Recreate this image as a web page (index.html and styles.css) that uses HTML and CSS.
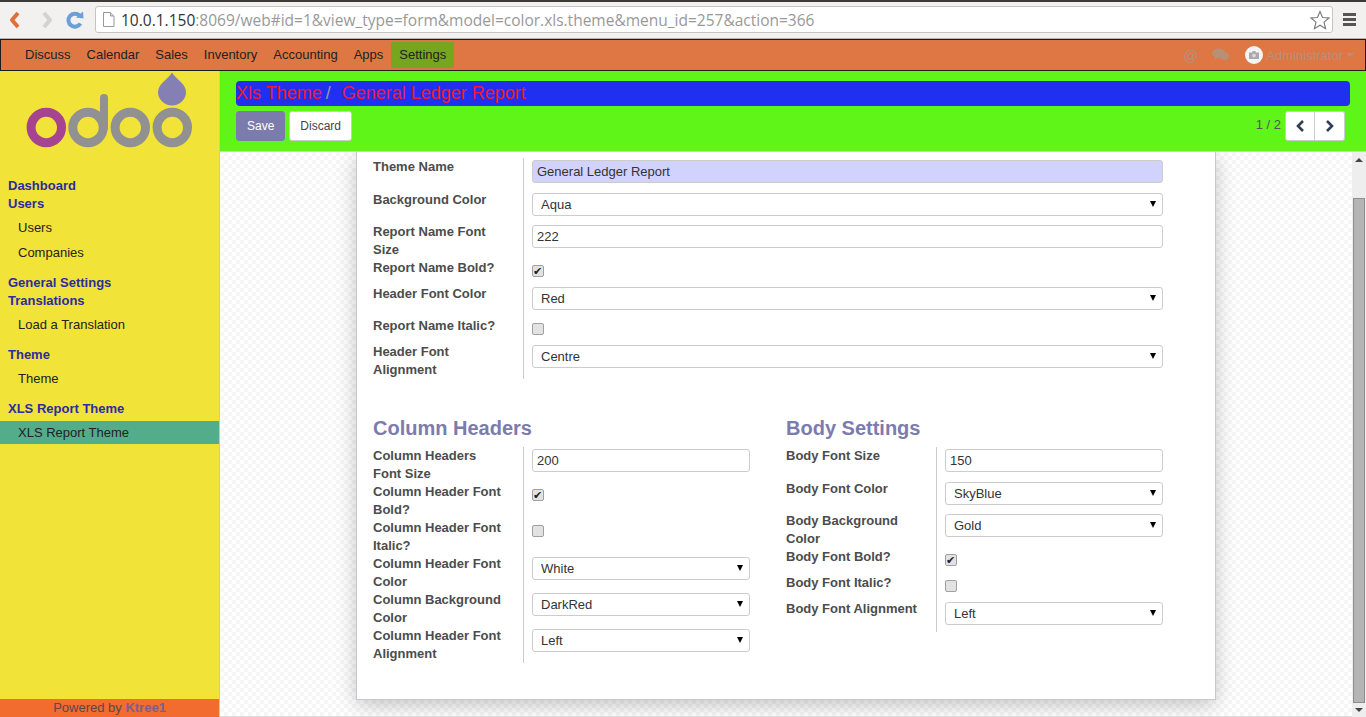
FILE: index.html
```html
<!doctype html>
<html>
<head>
<meta http-equiv="Content-Type" content="text/html; charset=utf-8">
<title>General Ledger Report - Odoo</title>
<link rel="stylesheet" href="styles.css">
</head>
<body>
<div class="chrome">
	<svg class="chrome-btn" width="20" height="24" viewBox="0 0 20 24"><path d="M13 5 L7 12 L13 19" fill="none" stroke="#e0703a" stroke-width="4" stroke-linejoin="round"/></svg>
	<svg class="chrome-btn fwd" width="20" height="24" viewBox="0 0 20 24"><path d="M7 5 L13 12 L7 19" fill="none" stroke="#d2d2d0" stroke-width="4" stroke-linejoin="round"/></svg>
	<svg class="chrome-btn" width="20" height="24" viewBox="0 0 20 24"><path d="M15.5 15.5 A6.5 6.5 0 1 1 14.5 7.5" fill="none" stroke="#6a9fd8" stroke-width="4"/><path d="M11 9.5 L18.5 10.5 L18 3.5 Z" fill="#6a9fd8"/></svg>
	<div class="urlbar">
		<svg width="13" height="15" viewBox="0 0 13 15"><path d="M1.5 .5 H8.5 L12 4 V14.5 H1.5 Z" fill="#fff" stroke="#999"/><path d="M8.5 .5 V4 H12" fill="#ddd" stroke="#999"/></svg>
		<span class="url"><b>10.0.1.150</b>:8069/web#id=1&amp;view_type=form&amp;model=color.xls.theme&amp;menu_id=257&amp;action=366</span>
		<svg class="star" width="20" height="20" viewBox="0 0 20 20"><path d="M10 1.5 L12.5 7.5 L19 8 L14 12.2 L15.6 18.6 L10 15.2 L4.4 18.6 L6 12.2 L1 8 L7.5 7.5 Z" fill="#fff" stroke="#777" stroke-width="1.1"/></svg>
	</div>
	<div class="hamburger"><i></i><i></i><i></i></div>
</div>

<nav class="navbar">
	<div class="apps">
		<a href="#">Discuss</a>
		<a href="#">Calendar</a>
		<a href="#">Sales</a>
		<a href="#">Inventory</a>
		<a href="#">Accounting</a>
		<a href="#">Apps</a>
		<a href="#" class="on">Settings</a>
	</div>
	<div class="systray">
		<span class="at">@</span>
		<svg class="chat" width="17" height="14" viewBox="0 0 17 14"><ellipse cx="6.5" cy="5" rx="6.5" ry="4.6" fill="#b89078"/><path d="M3 8 L2 12 L7 9 Z" fill="#b89078"/><ellipse cx="12" cy="8" rx="5" ry="3.8" fill="#b89078"/><path d="M14 10 L15.5 13.5 L11 11 Z" fill="#b89078"/></svg>
		<span class="avatar"><svg width="10" height="8" viewBox="0 0 10 8"><path d="M0 1.5 H3 L3.8 0 H6.2 L7 1.5 H10 V8 H0 Z" fill="#aaa"/><circle cx="5" cy="4.6" r="1.8" fill="#ddd"/></svg></span>
		<span class="user">Administrator</span>
		<span class="caret"></span>
	</div>
</nav>

<div class="app">
	<aside class="sidebar">
		<div class="logo">
			<svg width="219" height="105" viewBox="0 0 219 105">
				<g fill="none" stroke-width="9">
					<circle cx="46.3" cy="56.5" r="15.2" stroke="#a6448f"/>
					<circle cx="88" cy="56.5" r="15.2" stroke="#919191"/>
					<path d="M104 56.5 V27" stroke="#919191" stroke-width="8" stroke-linecap="round"/>
					<circle cx="130.3" cy="56.5" r="15.2" stroke="#919191"/>
					<circle cx="172.3" cy="56.5" r="15.2" stroke="#919191"/>
				</g>
				<path d="M172 1.5 C176 8 186 13 186 21 A14 13.5 0 0 1 158 21 C158 13 168 8 172 1.5 Z" fill="#8580b4"/>
			</svg>
		</div>
		<div class="menu">
			<div class="menu-group">
				<a href="#" class="menu-head">Dashboard</a>
				<a href="#" class="menu-head">Users</a>
				<div class="menu-sub">
					<a href="#">Users</a>
					<a href="#">Companies</a>
				</div>
			</div>
			<div class="menu-group">
				<a href="#" class="menu-head">General Settings</a>
				<a href="#" class="menu-head">Translations</a>
				<div class="menu-sub">
					<a href="#">Load a Translation</a>
				</div>
			</div>
			<div class="menu-group">
				<a href="#" class="menu-head">Theme</a>
				<div class="menu-sub">
					<a href="#">Theme</a>
				</div>
			</div>
			<div class="menu-group">
				<a href="#" class="menu-head">XLS Report Theme</a>
				<div class="menu-sub">
					<a href="#" class="active">XLS Report Theme</a>
				</div>
			</div>
		</div>
		<div class="powered">Powered by <b>Ktree1</b></div>
	</aside>

	<div class="workspace">
		<div class="control-panel">
			<div class="breadcrumb"><a href="#">Xls Theme</a><span class="sep">/</span><span class="current">General Ledger Report</span></div>
			<div class="cp-row">
				<div class="cp-buttons">
					<button class="btn btn-primary">Save</button>
					<button class="btn">Discard</button>
				</div>
				<div class="pager">
					<span class="pager-value">1 / 2</span>
					<div class="pager-btns">
						<button class="btn pager-btn"><svg width="12" height="14" viewBox="0 0 12 14"><path d="M9 2 L4 7 L9 12" fill="none" stroke="#2f3f55" stroke-width="2.6"/></svg></button>
						<button class="btn pager-btn"><svg width="12" height="14" viewBox="0 0 12 14"><path d="M3 2 L8 7 L3 12" fill="none" stroke="#2f3f55" stroke-width="2.6"/></svg></button>
					</div>
				</div>
			</div>
		</div>

		<div class="content-wrap">
			<div class="content">
				<div class="sheet">
					<div class="group">
						<div class="row"><label>Theme Name</label><div class="val"><input class="required" value="General Ledger Report"></div></div>
						<div class="row"><label>Background Color</label><div class="val"><div class="sel"><select><option>Aqua</option></select></div></div></div>
						<div class="row"><label>Report Name Font Size</label><div class="val"><input value="222"></div></div>
						<div class="row"><label>Report Name Bold?</label><div class="val"><input type="checkbox" checked></div></div>
						<div class="row"><label>Header Font Color</label><div class="val"><div class="sel"><select><option>Red</option></select></div></div></div>
						<div class="row"><label>Report Name Italic?</label><div class="val"><input type="checkbox"></div></div>
						<div class="row"><label>Header Font Alignment</label><div class="val"><div class="sel"><select><option>Centre</option></select></div></div></div>
					</div>
					<div class="columns">
						<div class="group">
							<h2>Column Headers</h2>
							<div class="row"><label>Column Headers Font Size</label><div class="val"><input value="200"></div></div>
							<div class="row"><label>Column Header Font Bold?</label><div class="val"><input type="checkbox" checked></div></div>
							<div class="row"><label>Column Header Font Italic?</label><div class="val"><input type="checkbox"></div></div>
							<div class="row"><label>Column Header Font Color</label><div class="val"><div class="sel"><select><option>White</option></select></div></div></div>
							<div class="row"><label>Column Background Color</label><div class="val"><div class="sel"><select><option>DarkRed</option></select></div></div></div>
							<div class="row"><label>Column Header Font Alignment</label><div class="val"><div class="sel"><select><option>Left</option></select></div></div></div>
						</div>
						<div class="group">
							<h2>Body Settings</h2>
							<div class="row"><label>Body Font Size</label><div class="val"><input value="150"></div></div>
							<div class="row"><label>Body Font Color</label><div class="val"><div class="sel"><select><option>SkyBlue</option></select></div></div></div>
							<div class="row"><label>Body Background Color</label><div class="val"><div class="sel"><select><option>Gold</option></select></div></div></div>
							<div class="row"><label>Body Font Bold?</label><div class="val"><input type="checkbox" checked></div></div>
							<div class="row"><label>Body Font Italic?</label><div class="val"><input type="checkbox"></div></div>
							<div class="row"><label>Body Font Alignment</label><div class="val"><div class="sel"><select><option>Left</option></select></div></div></div>
						</div>
					</div>
				</div>
			</div>
			<div class="scrollbar">
				<span class="arrow-up"></span>
				<span class="thumb"></span>
				<span class="arrow-down"></span>
			</div>
		</div>
	</div>
</div>
</body>
</html>
```

FILE: styles.css
```css
*{
	box-sizing:border-box;
}
html,body{
	margin:0;
	height:717px;
	overflow:hidden;
}
body{
	display:flex;
	flex-direction:column;
	font-family:"Liberation Sans",Arial,sans-serif;
	font-size:13px;
	color:#333;
}
a{
	text-decoration:none;
	color:inherit;
}

/* browser bar */
.chrome{
	height:39px;
	flex:none;
	display:flex;
	align-items:center;
	padding:0 0 1px 5px;
	background:#f2f1f0;
	border-top:2px solid #3c3b37;
	border-bottom:1px solid #b5b5b3;
}
.chrome-btn{
	margin-right:12px;
}
.chrome-btn.fwd{
	margin-right:8px;
}
.urlbar{
	width:1238px;
	height:27px;
	margin-left:-2px;
	display:flex;
	align-items:center;
	padding:0 2px 0 6px;
	background:#fff;
	border:1px solid #c4c4c4;
	border-radius:3px;
}
.url{
	margin-left:6px;
	font-family:"Open Sans","Noto Sans",sans-serif;
	font-size:15.5px;
	color:#999;
	white-space:nowrap;
	flex:1;
}
.url b{
	font-weight:normal;
	color:#333;
}
.hamburger{
	margin-left:10px;
	width:13px;
	display:flex;
	flex-direction:column;
	gap:2px;
}
.hamburger i{
	display:block;
	height:3px;
	background:#555;
}

/* top menu */
.navbar{
	height:32px;
	flex:none;
	display:flex;
	justify-content:space-between;
	background:#de7744;
	border:1px solid #1d1d1d;
	padding-left:16px;
}
.apps{
	display:flex;
	align-items:center;
}
.apps a{
	height:26px;
	line-height:26px;
	padding:0 8px;
	color:#222;
}
.apps a.on{
	background:#75a61e;
}
.systray{
	display:flex;
	align-items:center;
	color:#b89078;
	padding-right:11px;
}
.at{
	font-size:15px;
	margin-right:14px;
}
.chat{
	margin-right:16px;
}
.avatar{
	width:18px;
	height:18px;
	border-radius:50%;
	background:#f4f4f4;
	display:flex;
	align-items:center;
	justify-content:center;
	margin-right:3px;
}
.caret{
	margin-left:3px;
	border:4px solid transparent;
	border-top-color:#b89078;
	border-bottom:0;
	width:0;
	height:0;
}

.app{
	flex:1;
	min-height:0;
	display:flex;
}

/* sidebar */
.sidebar{
	width:220px;
	flex:none;
	display:flex;
	flex-direction:column;
	background:#f1e338;
	border-right:1px solid #c9c9c0;
}
.logo{
	height:106px;
	flex:none;
}
.logo svg{
	display:block;
}
.menu{
	flex:1;
}
.menu-group{
	margin-bottom:9px;
}
.menu-head{
	display:block;
	height:18px;
	line-height:18px;
	padding-left:8px;
	font-weight:bold;
	color:#2c2ca0;
}
.menu-sub{
	margin-top:3px;
}
.menu-sub a{
	display:block;
	height:24px;
	line-height:24px;
	margin-bottom:1px;
	padding-left:18px;
	color:#222;
}
.menu-sub a.active{
	background:#53ad8a;
	height:23px;
	line-height:23px;
}
.powered{
	height:18px;
	flex:none;
	line-height:18px;
	text-align:center;
	background:#f26b2f;
	color:#5a4a48;
}
.powered b{
	color:#7e5f8c;
}

/* control panel */
.workspace{
	flex:1;
	min-width:0;
	display:flex;
	flex-direction:column;
}
.control-panel{
	height:81px;
	flex:none;
	padding:10px 16px 0;
	background:#5ff518;
	border-bottom:1px solid #cfcfcf;
}
.breadcrumb{
	height:25px;
	line-height:24px;
	background:#1f30f0;
	border-radius:4px;
	font-size:18px;
	color:#ee1a30;
	white-space:pre;
}
.sep{
	color:#9a9a9a;
	margin:0 11px 0 4px;
}
.cp-row{
	margin-top:5px;
	display:flex;
	justify-content:space-between;
}
.cp-buttons{
	display:flex;
	gap:4px;
}
.btn{
	height:30px;
	padding:0 10px;
	background:#fff;
	border:1px solid #ccc;
	border-radius:3px;
	font-family:inherit;
	font-size:12px;
	color:#444;
}
.btn-primary{
	background:#7c7bad;
	border-color:#7c7bad;
	color:#fff;
}
.pager{
	display:flex;
	align-items:center;
	gap:4px;
	margin-right:5px;
}
.pager-value{
	color:#555;
	margin-bottom:3px;
}
.pager-btns{
	display:flex;
}
.pager-btn{
	width:30px;
	padding:0;
	display:flex;
	align-items:center;
	justify-content:center;
}
.pager-btn:first-child{
	border-radius:3px 0 0 3px;
}
.pager-btn:last-child{
	border-left:0;
	border-radius:0 3px 3px 0;
}

/* form */
.content-wrap{
	flex:1;
	min-height:0;
	display:flex;
}
.content{
	flex:1;
	min-width:0;
	background-color:#fff;
	background-image:repeating-conic-gradient(#f6f6f6 0 25%,#fff 0 50%);
	background-size:8px 8px;
	border-bottom:1px solid #dcdcdc;
	overflow:hidden;
}
.sheet{
	width:860px;
	height:548px;
	margin:0 auto;
	padding:6px 52px 0 16px;
	background:#fff;
	border:1px solid #c8c8d0;
	border-top:0;
	box-shadow:0 5px 20px -1px rgba(0,0,0,.25);
}
.row{
	display:flex;
}
.row label{
	width:151px;
	flex:none;
	padding-right:15px;
	line-height:18px;
	font-weight:bold;
	color:#4c4c4c;
	border-right:1px solid #ccc;
}
.val{
	flex:1;
	min-width:0;
	padding:2px 0 7px 8px;
}
.val input:not([type=checkbox]),.val select{
	display:block;
	width:100%;
	height:23px;
	background:#fff;
	border:1px solid #ccc;
	border-radius:3px;
	font-family:inherit;
	font-size:13px;
	color:#333;
}
.val input:not([type=checkbox]){
	margin-bottom:1px;
	padding:0 4px;
}
.val input.required{
	background:#d2d2ff;
}
.sel{
	position:relative;
}
.val select{
	padding:0 8px;
	appearance:none;
}
.sel::after{
	content:"";
	position:absolute;
	right:7px;
	top:8px;
	border:3.5px solid transparent;
	border-top:6px solid #000;
	border-bottom:0;
}
.val input[type=checkbox]{
	display:block;
	appearance:none;
	width:12px;
	height:12px;
	margin:4px 0 1px;
	background:#e2e2e2;
	border:1px solid #a0a0a0;
	border-radius:2px;
	position:relative;
}
.val input[type=checkbox]:checked::after{
	content:"\2714";
	position:absolute;
	left:0;
	top:-2px;
	font-size:11px;
	line-height:14px;
	color:#222;
}
.columns{
	display:flex;
	gap:36px;
	margin-top:34px;
}
.columns .group{
	width:377px;
}
h2{
	margin:0 0 4px;
	height:30px;
	line-height:30px;
	font-size:20px;
	font-weight:bold;
	color:#7c7bad;
}

/* fake scrollbar, page is already scrolled a little */
.scrollbar{
	width:14px;
	flex:none;
	display:flex;
	flex-direction:column;
	align-items:center;
	background:#eee;
}
.arrow-up{
	margin-top:6px;
	border:4px solid transparent;
	border-bottom:4px solid #444;
	border-top:0;
}
.thumb{
	width:12px;
	height:505px;
	margin-top:36px;
	background:#b5b5b5;
	border:1px solid #8e8e8e;
}
.arrow-down{
	margin-top:5px;
	border:4px solid transparent;
	border-top:4px solid #444;
	border-bottom:0;
}
```
